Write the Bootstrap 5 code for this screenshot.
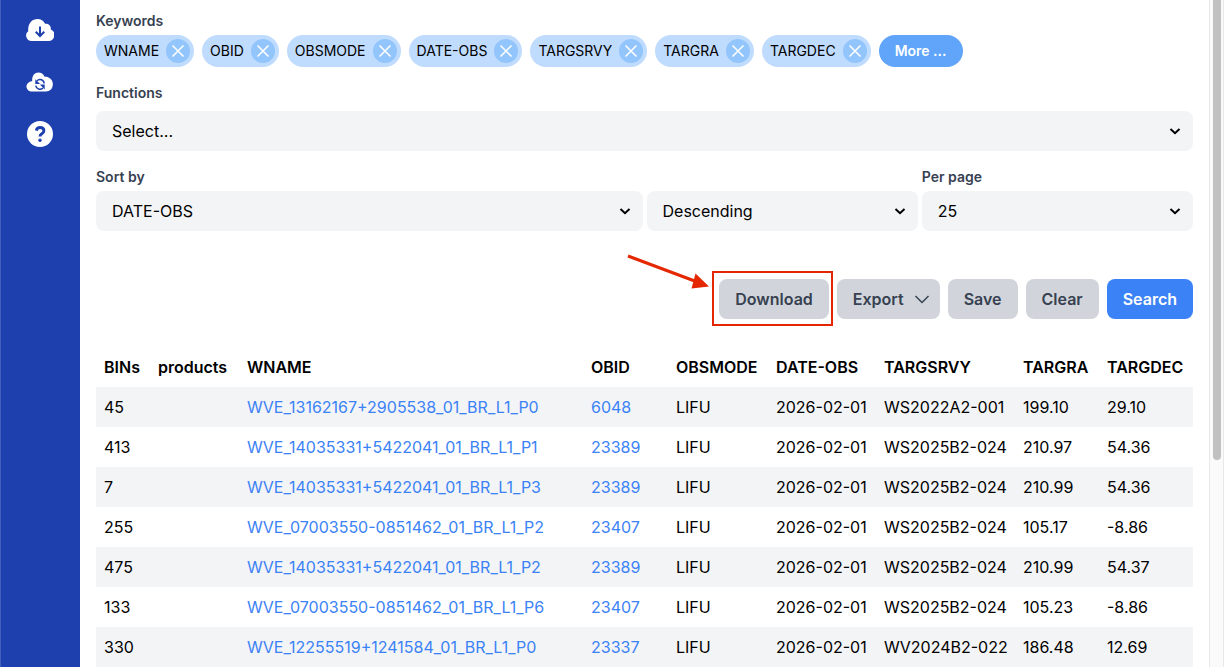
<!DOCTYPE html>
<html lang="en">
<head>
<meta charset="utf-8">
<meta name="viewport" content="width=device-width, initial-scale=1">
<title>Observations</title>
<link href="https://cdn.jsdelivr.net/npm/bootstrap@5.3.0/dist/css/bootstrap.min.css" rel="stylesheet">
<style>
body { font-family: Inter, "Liberation Sans", sans-serif; font-size: 16px; line-height: 24px; color: #000; background: #fff; }
.sidebar { width: 80px; background: #1e40af; box-shadow: inset 1px 0 #4360bd; color: #fff; padding-top: 16px; gap: 24px; }
.sidebar a { color: #fff; height: 28px; }
.sidebar svg { display: block; }
.content { padding-top: 11px; }
.field-label { font-size: 14px; line-height: 20px; font-weight: 600; color: #374151; }
.chip { background: #bfdbfe; font-size: 14px; height: 32px; padding: 0 4px 0 8px; gap: 7px; }
.chip-x { width: 24px; height: 24px; padding: 0; background-color: #93c5fd; color: #fff; border: 0; }
.chip-more { height: 32px; padding: 0 16px; border: 0; background: #60a5fa; color: #fff; font-size: 14px; font-weight: 600; }
.field-select { height: 40px; border: 0; border-radius: 8px; padding: 0 40px 0 16px; color: #000; background-color: #f3f4f6; background-position: right 12px center; background-size: 12px 12px;
  background-image: url("data:image/svg+xml,%3Csvg xmlns='http://www.w3.org/2000/svg' viewBox='0 0 12 12'%3E%3Cpath d='M1.5 4 6 8.2 10.5 4' fill='none' stroke='%23000' stroke-width='2'/%3E%3C/svg%3E"); }
.action { height: 40px; border: 0; border-radius: 8px; padding: 0 16px; background: #d1d5db; color: #374151; font-weight: 600; }
.action-menu { padding-right: 8px; }
.action-primary { background: #3b82f6; color: #fff; }
.actions { margin: 48px 0 28px; }
.callout-box { position: absolute; inset: -8px -4px -7px -7px; border: 2px solid #e42700; }
.callout-arrow { position: absolute; right: 100%; top: -26px; margin-right: 9px; }
.results { table-layout: fixed; width: 100%; white-space: nowrap; }
.results th, .results td { height: 40px; padding: 8px; line-height: 24px; }
.results th { font-weight: 600; }
.results tbody tr:nth-child(odd) { background: #f3f4f6; }
.results a { color: #3b82f6; text-decoration: none; }
.w-bins { width: 54px; } .w-prod { width: 89px; } .w-obid { width: 85px; } .w-mode { width: 100px; }
.w-date { width: 108px; } .w-srvy { width: 139px; } .w-ra { width: 84px; } .w-dec { width: 94px; }
.scroll-track { width: 15px; background: #fafafa; border: solid #e8e8e8; border-width: 0 1px; padding: 0 2px 0 3px; }
.scroll-thumb { height: 69%; background: #c1c1c1; border-radius: 0 0 4px 4px; }
</style>
</head>
<body>
<div class="d-flex vh-100 overflow-hidden">
  <nav class="sidebar d-flex flex-column align-items-center flex-shrink-0" aria-label="Main">
    <a href="#" aria-label="Download"><svg width="28" height="28" viewBox="0 0 28 28"><path d="M5.500 25A5.500 5.500 0 0 1 2.200 15.200C1.600 7.500 6 3 11.500 3c3.500 0 6.100 1.800 7.600 4.800 3.700-.3 6.100 2.200 5.700 5.700A6 6 0 0 1 22 25Z" fill="#fff"/><path d="M14 10.500v9.500m-4.300-4.200L14 20l4.300-4.200" fill="none" stroke="#1e40af" stroke-width="2"/></svg></a>
    <a href="#" aria-label="Synchronise"><svg width="28" height="28" viewBox="0 0 28 28"><path d="M6 23.500A5 5 0 0 1 3 14.200a4.500 4.500 0 0 1 3.200-1C5.800 8 8.500 4.500 12.400 4.500c2.800 0 5 1.500 6 4.100 4.600.1 8.100 2.700 8.400 7 .3 4.600-2.600 7.900-6.800 7.900Z" fill="#fff"/><g fill="none" stroke="#1e40af" stroke-width="1.500"><path d="M18.200 15.500a4.200 4.200 0 0 0-7.200-2.700M9.700 17.700a4.200 4.200 0 0 0 7.200 2.200"/></g><path d="M9.300 11.200V16h4.800Zm9.400 10.200v-4.800h-4.800Z" fill="#1e40af"/></svg></a>
    <a href="#" aria-label="Help"><svg width="28" height="28" viewBox="0 0 28 28"><circle cx="14" cy="14" r="13" fill="#fff"/><path d="M10.300 10.600C10.800 8.500 12 7.500 14 7.500c2.300 0 3.900 1.200 3.900 3.200 0 1.600-1 2.400-2.100 3.100-1.200.8-1.800 1.300-1.800 2.700" fill="none" stroke="#1e40af" stroke-width="2.900"/><circle cx="14" cy="20.200" r="1.700" fill="#1e40af"/></svg></a>
  </nav>

  <main class="content flex-grow-1 px-3">
    <div class="field-label mb-1">Keywords</div>
    <div class="d-flex flex-wrap gap-2">
      <span class="chip rounded-pill d-flex align-items-center">WNAME<button class="chip-x rounded-circle" aria-label="Remove WNAME"><svg class="d-block" width="24" height="24"><use href="#x"/></svg></button></span>
      <span class="chip rounded-pill d-flex align-items-center">OBID<button class="chip-x rounded-circle" aria-label="Remove OBID"><svg class="d-block" width="24" height="24"><use href="#x"/></svg></button></span>
      <span class="chip rounded-pill d-flex align-items-center">OBSMODE<button class="chip-x rounded-circle" aria-label="Remove OBSMODE"><svg class="d-block" width="24" height="24"><use href="#x"/></svg></button></span>
      <span class="chip rounded-pill d-flex align-items-center">DATE-OBS<button class="chip-x rounded-circle" aria-label="Remove DATE-OBS"><svg class="d-block" width="24" height="24"><use href="#x"/></svg></button></span>
      <span class="chip rounded-pill d-flex align-items-center">TARGSRVY<button class="chip-x rounded-circle" aria-label="Remove TARGSRVY"><svg class="d-block" width="24" height="24"><use href="#x"/></svg></button></span>
      <span class="chip rounded-pill d-flex align-items-center">TARGRA<button class="chip-x rounded-circle" aria-label="Remove TARGRA"><svg class="d-block" width="24" height="24"><use href="#x"/></svg></button></span>
      <span class="chip rounded-pill d-flex align-items-center">TARGDEC<button class="chip-x rounded-circle" aria-label="Remove TARGDEC"><svg class="d-block" width="24" height="24"><use href="#x"/></svg></button></span>
      <button class="chip-more rounded-pill">More ...</button>
    </div>

    <label class="field-label d-block mt-3 mb-2" for="functions">Functions</label>
    <select class="form-select field-select" id="functions"><option>Select...</option></select>

    <div class="row gx-1 mt-3 align-items-end">
      <div class="col-6">
        <label class="field-label d-block mb-1" for="sort">Sort by</label>
        <select class="form-select field-select" id="sort"><option>DATE-OBS</option></select>
      </div>
      <div class="col-3">
        <select class="form-select field-select" aria-label="Sort order"><option>Descending</option></select>
      </div>
      <div class="col-3">
        <label class="field-label d-block mb-1" for="perpage">Per page</label>
        <select class="form-select field-select" id="perpage"><option>25</option></select>
      </div>
    </div>

    <div class="actions d-flex justify-content-end gap-2">
      <div class="position-relative">
        <button class="action">Download</button>
        <span class="callout-box pe-none"></span>
        <svg class="callout-arrow" width="84" height="38" viewBox="0 0 84 38" aria-hidden="true"><path d="M2 3 70 28.500" stroke="#e42700" stroke-width="3"/><path d="M69.500 20.500 83 33.500 65.500 35.500Z" fill="#e42700"/></svg>
      </div>
      <button class="action action-menu d-flex align-items-center gap-2">Export<svg width="20" height="20" viewBox="0 0 20 20"><path d="M3.500 7 10 13.500 16.500 7" fill="none" stroke="#374151" stroke-width="1.500"/></svg></button>
      <button class="action">Save</button>
      <button class="action">Clear</button>
      <button class="action action-primary">Search</button>
    </div>

    <table class="results">
      <colgroup><col class="w-bins"><col class="w-prod"><col><col class="w-obid"><col class="w-mode"><col class="w-date"><col class="w-srvy"><col class="w-ra"><col class="w-dec"></colgroup>
      <thead><tr><th>BINs</th><th>products</th><th>WNAME</th><th>OBID</th><th>OBSMODE</th><th>DATE-OBS</th><th>TARGSRVY</th><th>TARGRA</th><th>TARGDEC</th></tr></thead>
      <tbody>
        <tr><td>45</td><td></td><td><a href="#">WVE_13162167+2905538_01_BR_L1_P0</a></td><td><a href="#">6048</a></td><td>LIFU</td><td>2026-02-01</td><td>WS2022A2-001</td><td>199.10</td><td>29.10</td></tr>
        <tr><td>413</td><td></td><td><a href="#">WVE_14035331+5422041_01_BR_L1_P1</a></td><td><a href="#">23389</a></td><td>LIFU</td><td>2026-02-01</td><td>WS2025B2-024</td><td>210.97</td><td>54.36</td></tr>
        <tr><td>7</td><td></td><td><a href="#">WVE_14035331+5422041_01_BR_L1_P3</a></td><td><a href="#">23389</a></td><td>LIFU</td><td>2026-02-01</td><td>WS2025B2-024</td><td>210.99</td><td>54.36</td></tr>
        <tr><td>255</td><td></td><td><a href="#">WVE_07003550-0851462_01_BR_L1_P2</a></td><td><a href="#">23407</a></td><td>LIFU</td><td>2026-02-01</td><td>WS2025B2-024</td><td>105.17</td><td>-8.86</td></tr>
        <tr><td>475</td><td></td><td><a href="#">WVE_14035331+5422041_01_BR_L1_P2</a></td><td><a href="#">23389</a></td><td>LIFU</td><td>2026-02-01</td><td>WS2025B2-024</td><td>210.99</td><td>54.37</td></tr>
        <tr><td>133</td><td></td><td><a href="#">WVE_07003550-0851462_01_BR_L1_P6</a></td><td><a href="#">23407</a></td><td>LIFU</td><td>2026-02-01</td><td>WS2025B2-024</td><td>105.23</td><td>-8.86</td></tr>
        <tr><td>330</td><td></td><td><a href="#">WVE_12255519+1241584_01_BR_L1_P0</a></td><td><a href="#">23337</a></td><td>LIFU</td><td>2026-02-01</td><td>WV2024B2-022</td><td>186.48</td><td>12.69</td></tr>
      </tbody>
    </table>
  </main>

  <div class="scroll-track flex-shrink-0" aria-hidden="true"><div class="scroll-thumb"></div></div>
</div>
<svg width="0" height="0" class="position-absolute" aria-hidden="true"><symbol id="x" viewBox="0 0 24 24"><path d="m6.500 6.500 11 11m0-11-11 11" fill="none" stroke="#fff" stroke-width="1.500"/></symbol></svg>
<script src="https://cdn.jsdelivr.net/npm/bootstrap@5.3.0/dist/js/bootstrap.bundle.min.js"></script>
</body>
</html>
